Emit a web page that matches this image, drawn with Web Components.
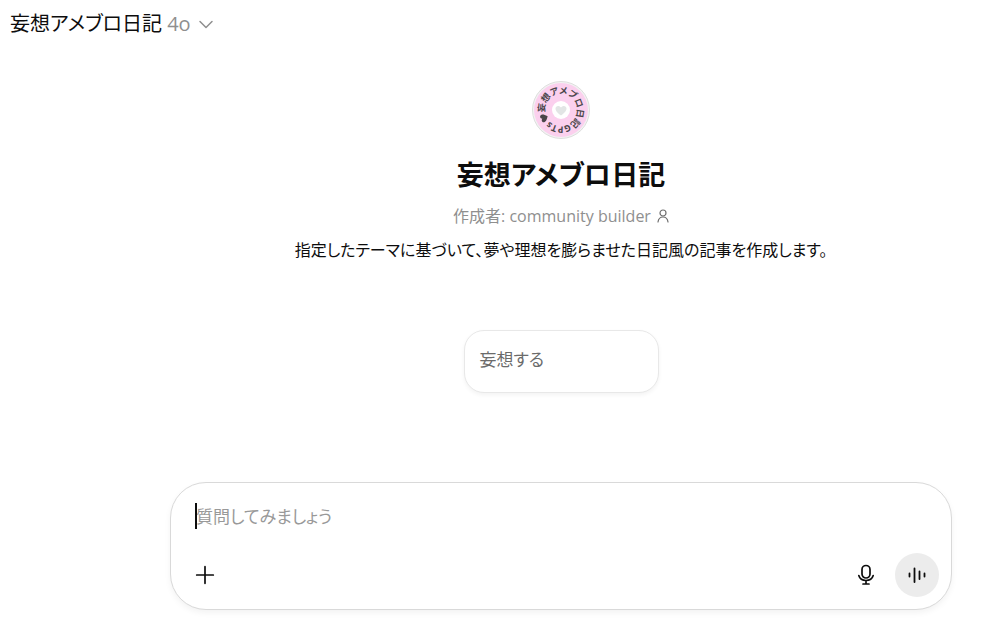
<!DOCTYPE html>
<html lang="ja">
<head>
<meta charset="utf-8">
<meta name="viewport" content="width=device-width, initial-scale=1">
<title>妄想アメブロ日記</title>
<style>
  body {
    margin: 0;
    background: #fff;
    color: #0d0d0d;
    font-family: "Open Sans", "Noto Sans CJK JP", sans-serif;
    font-feature-settings: "palt";
  }
</style>
</head>
<body>
<gpt-app></gpt-app>
<script>
const define = (name, html) => customElements.define(name, class extends HTMLElement {
  constructor() {
    super();
    this.attachShadow({ mode: "open" }).innerHTML = html;
  }
});

define("model-switcher", `
  <style>
    :host { display: flex; padding: 8px; }
    button { display: flex; align-items: center; gap: 5px; padding: 0 2px; border: 0; background: none;
      font: inherit; font-size: 20px; line-height: 32px; color: inherit; font-feature-settings: inherit; }
    .version { color: #8f8f8f; }
    svg { margin-left: 2px; }
  </style>
  <button type="button" aria-haspopup="menu">
    <span><slot></slot></span><span class="version"><slot name="version"></slot></span>
    <svg width="16" height="16" viewBox="0 0 16 16" fill="none" stroke="#8f8f8f" stroke-width="1.500" stroke-linecap="round" stroke-linejoin="round" aria-hidden="true"><path d="M2 5.500l6 6 6-6"/></svg>
  </button>
`);

define("gpt-avatar", `
  <style>
    :host { display: block; width: 58px; height: 58px; }
    svg { display: block; }
    text { font-size: 9px; font-weight: 700; fill: #4a4549; }
  </style>
  <svg width="58" height="58" viewBox="0 0 58 58" role="img" aria-label="アイコン">
    <defs><path id="ring" d="M13.200 31.500a16 16 0 1 1 31.600-5a16 16 0 1 1-31.600 5"/></defs>
    <circle cx="29" cy="29" r="28.500" fill="#f3f3f3" stroke="#dedede"/>
    <circle cx="29" cy="29" r="27" fill="#fbd0ee"/>
    <circle cx="29" cy="29" r="9" fill="#fff"/>
    <path d="M29 34.500C25 31.500 23.500 29.500 23.500 27.500C23.500 24.500 27.500 24 29 26.500C30.500 24 34.500 24.500 34.500 27.500C34.500 29.500 33 31.500 29 34.500Z" fill="#e2e5e5"/>
    <text><textPath href="#ring">妄想アメブロ日記GPTs</textPath></text>
    <path transform="translate(12 37) rotate(-114)" d="M0 4C-3 1.700-4 .5-4-1C-4-3.500-1-4 0-1.800C1-4 4-3.500 4-1C4 .5 3 1.700 0 4Z" fill="#4a4549"/>
  </svg>
`);

define("gpt-profile", `
  <style>
    :host { display: flex; flex-direction: column; align-items: center; text-align: center; }
    h1 { margin: 16px 0 0; font-size: 27px; line-height: 40px; font-weight: 700; }
    .author { display: flex; align-items: center; gap: 6px; margin-top: 9px; font-size: 16px; line-height: 24px; color: #8f8f8f; }
    p { margin: 10px 0 0; font-size: 16px; line-height: 24px; }
  </style>
  <gpt-avatar></gpt-avatar>
  <h1><slot name="name"></slot></h1>
  <div class="author">
    <span><slot name="author"></slot></span>
    <svg width="12" height="14" viewBox="0 0 12 14" fill="none" stroke="#6f6f6f" stroke-width="1.200" stroke-linecap="round" aria-hidden="true"><circle cx="6" cy="4" r="3"/><path d="M1 13c.5-3.500 2.500-5 5-5s4.500 1.500 5 5"/></svg>
  </div>
  <p><slot></slot></p>
`);

define("starter-card", `
  <style>
    :host { display: block; width: 195px; }
    button { display: block; width: 100%; padding: 16px 15px 20px; border: 1px solid #e8e8e8; border-radius: 20px;
      background: #fff; box-shadow: 0 2px 4px rgba(0,0,0,.05); text-align: left;
      font: inherit; font-size: 17px; line-height: 25px; color: #6b6b6b; font-feature-settings: inherit; }
  </style>
  <button type="button"><slot></slot></button>
`);

define("prompt-composer", `
  <style>
    :host { display: block; }
    form { box-sizing: border-box; padding: 18px 12px 12px 24px; border: 1px solid #d9d9d9; border-radius: 36px;
      background: #fff; box-shadow: 0 3px 6px rgba(0,0,0,.05); }
    .field { position: relative; }
    .field::before { content: ""; position: absolute; left: 0; top: 2px; width: 2px; height: 26px; background: #0d0d0d; }
    textarea { display: block; box-sizing: border-box; width: 100%; height: 32px; padding: 0 1px; border: 0; outline: 0; resize: none;
      overflow: hidden; background: none; font: inherit; font-size: 17px; line-height: 32px; color: inherit; font-feature-settings: inherit; }
    textarea::placeholder { color: #999; opacity: 1; }
    .tools { display: flex; align-items: center; margin-top: 20px; }
    button { display: grid; place-items: center; width: 44px; height: 44px; padding: 0; border: 0; border-radius: 50%; background: none; color: #0d0d0d; }
    .add { width: 20px; }
    .mic { margin-left: auto; }
    .voice { margin-left: 7px; background: #ececec; }
    svg { display: block; fill: none; stroke: currentColor; stroke-linecap: round; }
  </style>
  <form>
    <div class="field"><textarea rows="1" aria-label="質問" placeholder="質問してみましょう"></textarea></div>
    <div class="tools">
      <button class="add" type="button" aria-label="追加"><svg width="20" height="20" viewBox="0 0 20 20" stroke-width="1.700"><path d="M10 1.700v16.600M1.700 10h16.600"/></svg></button>
      <button class="mic" type="button" aria-label="音声入力"><svg width="20" height="22" viewBox="0 0 20 22" stroke-width="1.700"><rect x="6" y="1.500" width="8" height="12.500" rx="4"/><path d="M2.800 11.500c1 3.300 3.700 5 7.200 5s6.200-1.700 7.200-5M10 16.500v3.500M7 20h6"/></svg></button>
      <button class="voice" type="button" aria-label="音声モード"><svg width="20" height="20" viewBox="0 0 20 20" stroke-width="1.800"><path d="M2.500 8.500v3M7.500 3.500v13.500M12.500 6.500v7.500M17.500 8.500v3"/></svg></button>
    </div>
  </form>
`);

define("gpt-app", `
  <style>
    :host { display: block; }
    main { display: flex; flex-direction: column; align-items: center; padding: 33px 48px 9px 170px; }
    starter-card { margin-top: 68px; }
    prompt-composer { align-self: stretch; margin-top: 89px; }
  </style>
  <header><model-switcher>妄想アメブロ日記<span slot="version">4o</span></model-switcher></header>
  <main>
    <gpt-profile>
      <span slot="name">妄想アメブロ日記</span>
      <span slot="author">作成者: community builder</span>
      指定したテーマに基づいて、夢や理想を膨らませた日記風の記事を作成します。
    </gpt-profile>
    <starter-card>妄想する</starter-card>
    <prompt-composer></prompt-composer>
  </main>
`);
</script>
</body>
</html>
